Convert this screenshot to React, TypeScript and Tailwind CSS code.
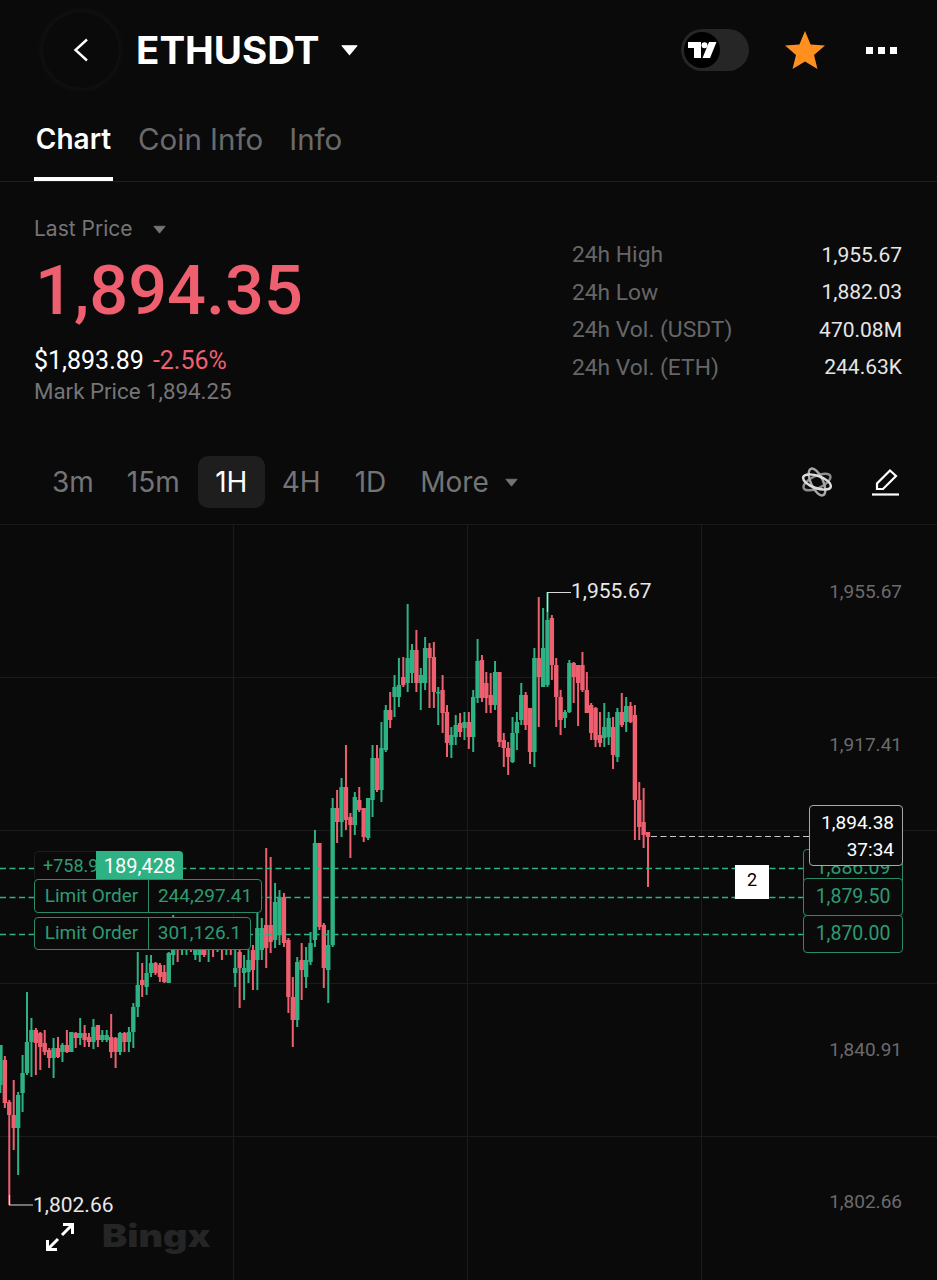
import React from 'react';

type Candle = [string, number, number, number, number];

// right to left: color, wick top, body top, body bottom, wick bottom (page px)
const candles: Candle[] = [
  ['r', 832, 832, 837, 887], ['r', 788, 822, 835, 848], ['r', 782, 800, 827, 840], ['r', 705, 715, 800, 840],
  ['r', 702, 706, 722, 723], ['g', 697, 706, 722, 732], ['r', 693, 712, 725, 727], ['g', 708, 712, 757, 762],
  ['r', 717, 727, 755, 769], ['g', 712, 718, 737, 745], ['g', 703, 727, 738, 747], ['r', 712, 735, 743, 747],
  ['r', 707, 708, 740, 747], ['r', 703, 705, 733, 740], ['r', 672, 690, 713, 713], ['r', 652, 665, 690, 692],
  ['r', 665, 665, 683, 726], ['r', 662, 663, 677, 703], ['g', 660, 663, 712, 713], ['g', 710, 712, 718, 728],
  ['r', 690, 697, 720, 735], ['r', 658, 665, 697, 727], ['r', 615, 618, 665, 680], ['g', 592, 620, 685, 687],
  ['g', 608, 648, 687, 687], ['r', 597, 658, 677, 727], ['g', 648, 658, 752, 767], ['r', 708, 708, 752, 764],
  ['r', 692, 695, 725, 730], ['g', 683, 695, 720, 725], ['g', 712, 722, 733, 750], ['g', 717, 733, 762, 763],
  ['r', 742, 748, 757, 775], ['r', 733, 740, 748, 767], ['r', 672, 672, 742, 747], ['g', 661, 672, 705, 710],
  ['r', 673, 695, 705, 713], ['r', 672, 683, 698, 713], ['r', 655, 660, 698, 702], ['g', 639, 661, 698, 703],
  ['g', 690, 697, 737, 752], ['r', 712, 722, 737, 749], ['g', 712, 722, 728, 740], ['r', 713, 723, 732, 737],
  ['g', 715, 725, 737, 745], ['g', 727, 735, 745, 758], ['r', 705, 712, 743, 757], ['r', 675, 690, 713, 733],
  ['g', 687, 692, 693, 725], ['r', 642, 657, 692, 708], ['r', 643, 648, 658, 708], ['g', 637, 648, 683, 690],
  ['g', 668, 675, 683, 710], ['r', 630, 650, 683, 692], ['g', 644, 650, 673, 683], ['g', 604, 658, 683, 692],
  ['r', 657, 677, 685, 687], ['g', 658, 685, 697, 707], ['g', 675, 687, 697, 717], ['r', 692, 710, 720, 728],
  ['g', 705, 710, 750, 752], ['g', 722, 748, 790, 802], ['r', 745, 758, 790, 792], ['g', 745, 758, 800, 817],
  ['g', 798, 798, 838, 840], ['r', 808, 808, 837, 842], ['r', 787, 800, 810, 812], ['g', 792, 797, 825, 835],
  ['r', 813, 817, 825, 858], ['r', 745, 787, 820, 830], ['g', 778, 787, 822, 837], ['r', 790, 808, 822, 843],
  ['g', 798, 808, 945, 947], ['g', 930, 945, 970, 1003], ['r', 923, 925, 968, 988], ['r', 843, 843, 927, 930],
  ['g', 830, 843, 940, 947], ['g', 932, 943, 962, 965], ['g', 947, 960, 977, 988], ['r', 943, 960, 970, 1000],
  ['g', 957, 962, 1020, 1027], ['r', 977, 997, 1020, 1047], ['r', 938, 940, 997, 1013], ['r', 893, 897, 943, 947],
  ['g', 890, 898, 935, 945], ['g', 883, 902, 940, 948], ['r', 857, 925, 942, 953], ['r', 848, 925, 948, 968],
  ['g', 918, 928, 950, 960], ['g', 913, 928, 960, 990], ['r', 945, 950, 970, 990], ['g', 945, 960, 972, 983],
  ['g', 955, 968, 973, 1000], ['r', 945, 952, 968, 1008], ['g', 950, 968, 973, 987], ['r', 920, 945, 948, 955],
  ['g', 925, 945, 948, 955], ['r', 925, 945, 950, 960], ['g', 925, 945, 950, 952], ['r', 918, 945, 950, 957],
  ['g', 920, 945, 950, 962], ['r', 925, 945, 955, 957], ['g', 930, 945, 955, 962], ['g', 925, 945, 955, 960],
  ['r', 920, 945, 950, 952], ['g', 930, 945, 950, 955], ['g', 925, 945, 950, 955], ['r', 930, 945, 950, 962],
  ['g', 915, 950, 955, 965], ['g', 952, 953, 983, 983], ['r', 965, 972, 982, 983], ['r', 963, 965, 977, 982],
  ['r', 962, 963, 973, 975], ['g', 955, 963, 973, 977], ['g', 955, 973, 987, 995], ['r', 963, 980, 985, 997],
  ['g', 952, 985, 1007, 1017], ['g', 1003, 1007, 1032, 1048], ['g', 1027, 1032, 1042, 1052], ['r', 1032, 1033, 1042, 1052],
  ['g', 1032, 1033, 1052, 1055], ['r', 1037, 1038, 1052, 1068], ['r', 1014, 1037, 1052, 1058], ['g', 1030, 1035, 1040, 1042],
  ['g', 1030, 1035, 1040, 1042], ['r', 1025, 1025, 1040, 1047], ['g', 1019, 1027, 1042, 1049], ['r', 1033, 1037, 1042, 1047],
  ['r', 1025, 1033, 1040, 1047], ['g', 1018, 1033, 1038, 1045], ['r', 1032, 1033, 1038, 1048], ['g', 1032, 1032, 1052, 1052],
  ['r', 1030, 1045, 1052, 1053], ['g', 1043, 1045, 1052, 1062], ['r', 1037, 1048, 1057, 1058], ['g', 1038, 1048, 1058, 1078],
  ['r', 1048, 1050, 1058, 1068], ['r', 1030, 1043, 1052, 1055], ['r', 1032, 1033, 1047, 1070], ['r', 1028, 1030, 1043, 1075],
  ['g', 1018, 1030, 1042, 1077], ['g', 992, 1042, 1073, 1075], ['g', 1055, 1073, 1093, 1112], ['g', 1092, 1095, 1128, 1175],
  ['r', 1080, 1115, 1128, 1150], ['r', 1100, 1102, 1115, 1205], ['r', 1056, 1060, 1103, 1108], ['g', 1045, 1045, 1085, 1093],
];

const GREEN = '#2eb183';
const RED = '#ee5f70';

const Caret = ({ className }: { className: string }) => (
  <svg viewBox="0 0 16 11" className={className}>
    <path d="M1 1.5h14L8 10z" fill="currentColor" stroke="currentColor" strokeLinejoin="round" />
  </svg>
);

const stats = [
  ['24h High', '1,955.67'],
  ['24h Low', '1,882.03'],
  ['24h Vol. (USDT)', '470.08M'],
  ['24h Vol. (ETH)', '244.63K'],
];

const axisLabels = [
  { text: '1,955.67', pos: 'top-[54px]' },
  { text: '1,917.41', pos: 'top-[207px]' },
  { text: '1,840.91', pos: 'top-[512px]' },
  { text: '1,802.66', pos: 'top-[664px]' },
];

// candle spacing is a bit tighter on the right part of the chart
const candleX = (k: number) => (k <= 61 ? 648 - 4.37 * k : 381.4 - 4.43 * (k - 61));

const Chart = () => (
  <svg viewBox="0 525 937 755" className="absolute inset-0 w-full h-full">
    {[233.5, 467.5, 701.5].map((x) => (
      <line key={x} x1={x} x2={x} y1={525} y2={1280} stroke="#1b1b1c" strokeWidth="1" />
    ))}
    {[677.5, 830.5, 983.5, 1136.5].map((y) => (
      <line key={y} x1={0} x2={937} y1={y} y2={y} stroke="#1b1b1c" strokeWidth="1" />
    ))}
    {candles.map(([c, wt, bt, bb, wb], k) => {
      const x = candleX(k);
      const color = c === 'g' ? GREEN : RED;
      return (
        <g key={k}>
          <line x1={x} x2={x} y1={wt} y2={wb} stroke={color} strokeWidth="2" />
          <rect x={x - 2.2} y={bt} width={4.4} height={Math.max(bb - bt, 1.5)} fill={color} />
        </g>
      );
    })}
    {[868.5, 897.5, 934.5].map((y) => (
      <line key={y} x1={0} x2={803} y1={y} y2={y} stroke={GREEN} strokeWidth="1.5" strokeDasharray="6 3.5" />
    ))}
    <line x1={651} x2={809} y1={836.5} y2={836.5} stroke="#c9c9c9" strokeWidth="1.2" strokeDasharray="6 3.5" />
    <path d="M547.5 612V592.5H571" fill="none" stroke="#d8d8d8" strokeWidth="1.2" />
    <path d="M9.5 1195V1205H33" fill="none" stroke="#d8d8d8" strokeWidth="1.2" />
  </svg>
);

export default function App() {
  return (
    <div className="w-[937px] h-[1280px] bg-[#0a0a0b] overflow-hidden flex flex-col font-['Roboto',sans-serif]">
      {/* header */}
      <div className="h-[100px] flex items-center pl-[43px] pr-[40px]">
        <button className="w-[76px] h-[76px] rounded-full shadow-[0_0_7px_2px_rgba(255,255,255,0.045)] flex items-center justify-center text-white">
          <svg viewBox="0 0 16 24" className="w-[16px] h-[24px]" fill="none" stroke="currentColor" strokeWidth="2.4">
            <path d="M14 1.5L2.5 12 14 22.5" />
          </svg>
        </button>
        <h1 className="ml-[17px] font-['Inter',sans-serif] font-bold text-[38.5px] leading-none text-white">ETHUSDT</h1>
        <Caret className="ml-[21px] w-[17px] h-[12px] text-white" />
        <div className="ml-auto w-[68px] h-[42px] rounded-full bg-[#262627] flex items-center pl-[3px]">
          <div className="w-[36px] h-[36px] rounded-full bg-black flex items-center justify-center">
            <svg viewBox="0 0 30 18" className="w-[30px] h-[18px]" fill="#fff">
              <path d="M1 1h13v16H7V7H1z" />
              <circle cx="17.5" cy="4.2" r="3" />
              <path d="M22 1h7.5L23 17h-7.5z" />
            </svg>
          </div>
        </div>
        <svg viewBox="0 0 40 38" className="ml-[36px] w-[40px] h-[38px]">
          <path d="M20 0l5.6 13.6L40 14.6 29 24l3.5 14L20 30.4 7.5 38 11 24 0 14.6l14.4-1z" fill="#ff8f1f" />
        </svg>
        <div className="ml-[41px] flex gap-[5px]">
          <span className="w-[7px] h-[7px] bg-white" />
          <span className="w-[7px] h-[7px] bg-white" />
          <span className="w-[7px] h-[7px] bg-white" />
        </div>
      </div>

      {/* tabs */}
      <div className="h-[82px] border-b border-[#1f1f20] flex items-start pl-[34px] font-['Inter',sans-serif] leading-none">
        <div className="w-[79px] h-full border-b-[4px] border-white -mb-px text-center pt-[25px] text-[28px] font-semibold text-white">Chart</div>
        <div className="ml-[25px] pt-[25px] text-[29.5px] text-[#6a6a6b]">Coin Info</div>
        <div className="ml-[26px] pt-[25px] text-[29.5px] text-[#6a6a6b]">Info</div>
      </div>

      {/* price block */}
      <div className="h-[241px] flex justify-between pl-[34px] pr-[35px]">
        <div className="flex flex-col items-start pt-[35px]">
          <div className="flex items-center text-[21px] leading-[24px] font-['Inter',sans-serif] text-[#757576]">
            Last Price
            <Caret className="ml-[20px] w-[13px] h-[9px]" />
          </div>
          <div className="mt-[15px] ml-[1px] text-[68.5px] leading-[70px] font-medium text-[#ee5f70]">1,894.35</div>
          <div className="mt-[20px] flex items-center gap-[9px] text-[25px] leading-[30px]">
            <span className="text-white">$1,893.89</span>
            <span className="text-[#ee5f70]">-2.56%</span>
          </div>
          <div className="text-[22.3px] leading-[30px] text-[#757576]">Mark Price 1,894.25</div>
        </div>
        <div className="w-[330px] pt-[59px] flex flex-col gap-[9px]">
          {stats.map(([label, value]) => (
            <div key={label} className="flex justify-between items-center h-[28.5px]">
              <span className="text-[22.8px] text-[#666667]">{label}</span>
              <span className="text-[21px] text-[#e6e6e6]">{value}</span>
            </div>
          ))}
        </div>
      </div>

      {/* intervals */}
      <div className="h-[102px] flex items-center pl-[52px] pr-[36px] pt-[17px] text-[28px] text-[#747475] border-b border-[#1a1a1b] font-['Inter',sans-serif]">
        <span>3m</span>
        <span className="ml-[33px]">15m</span>
        <span className="ml-[18px] w-[67px] h-[52px] rounded-[10px] bg-[#1e1e1f] text-white flex items-center justify-center">1H</span>
        <span className="ml-[17px]">4H</span>
        <span className="ml-[34px]">1D</span>
        <span className="ml-[34px]">More</span>
        <Caret className="ml-[16px] w-[13px] h-[9px]" />
        <svg viewBox="0 0 34 34" className="ml-auto w-[32px] h-[32px]" fill="none" strokeWidth="2.6">
          <ellipse cx="17" cy="17" rx="15.5" ry="6.5" transform="rotate(155 17 17)" stroke="#8d8d8d" />
          <ellipse cx="17" cy="17" rx="15.5" ry="6.5" transform="rotate(65 17 17)" stroke="#a8a8a8" />
          <ellipse cx="17" cy="17" rx="15.5" ry="6.5" transform="rotate(20 17 17)" stroke="#dcdcdc" />
        </svg>
        <svg viewBox="0 0 30 30" className="ml-[38px] w-[30px] h-[30px]" fill="none" stroke="#fff" strokeWidth="2.2">
          <path d="M3 22v-5.5L16 3.5l6 5.5L9 22z" transform="translate(3 0)" strokeLinejoin="miter" />
          <path d="M1 27.5h27" />
        </svg>
      </div>

      {/* chart */}
      <div className="relative flex-1">
        <Chart />

        {axisLabels.map((l) => (
          <span key={l.text} className={`absolute right-[35px] text-[19px] leading-[26px] text-[#6b6b6c] ${l.pos}`}>
            {l.text}
          </span>
        ))}

        <span className="absolute left-[571px] top-[53px] text-[21px] leading-[26px] text-[#e8e8e8]">1,955.67</span>
        <span className="absolute left-[33px] top-[667px] text-[21px] leading-[26px] text-[#e8e8e8]">1,802.66</span>

        {/* order labels */}
        <div className="absolute left-[34px] top-[326px] w-[149px] h-[30px] flex rounded-[4px] border border-[#1c1c1d] bg-[#0a0a0b] text-[18px] leading-[28px] text-[#2f9a72] pl-[8px]">
          +758.9
        </div>
        <div className="absolute left-[96px] top-[326px] w-[87px] h-[29px] rounded-tr-[4px] bg-[#2eb183] text-white text-[20px] leading-[31px] text-center">189,428</div>
        <div className="absolute left-[34px] top-[354px] w-[228px] h-[34px] flex rounded-[4px] border border-[#2a8a67] bg-[#0a0a0b] text-[19px] leading-[31px] text-[#2f9a72]">
          <span className="w-[114px] border-r border-[#2a8a67] text-center">Limit Order</span>
          <span className="flex-1 text-center">244,297.41</span>
        </div>
        <div className="absolute left-[34px] top-[392px] w-[217px] h-[33px] flex rounded-[4px] border border-[#2a8a67] bg-[#0a0a0b] text-[19px] leading-[30px] text-[#2f9a72]">
          <span className="w-[114px] border-r border-[#2a8a67] text-center">Limit Order</span>
          <span className="flex-1 text-center">301,126.1</span>
        </div>

        {/* axis tags */}
        <div className="absolute left-[803px] top-[324px] w-[100px] h-[37px] rounded-[4px] border border-[#2a8a67] bg-[#0a0a0b] text-[19.5px] leading-[36px] text-center text-[#2f9a72]">1,886.09</div>
        <div className="absolute left-[803px] top-[353px] w-[100px] h-[38px] rounded-[4px] border border-[#2a8a67] bg-[#0a0a0b] text-[19.5px] leading-[36px] text-center text-[#2f9a72]">1,879.50</div>
        <div className="absolute left-[803px] top-[390px] w-[100px] h-[38px] rounded-[4px] border border-[#2a8a67] bg-[#0a0a0b] text-[19.5px] leading-[36px] text-center text-[#2f9a72]">1,870.00</div>
        <div className="absolute left-[809px] top-[280px] w-[94px] h-[61px] rounded-[4px] border border-[#a9a9a9] bg-[#0a0a0b] text-[19px] leading-[27px] text-right text-white pr-[8px] pt-[3px]">
          <div>1,894.38</div>
          <div>37:34</div>
        </div>
        <div className="absolute left-[735px] top-[340px] w-[34px] h-[34px] bg-white text-black text-[18px] leading-[30px] text-center">2</div>

        {/* expand + watermark */}
        <svg viewBox="0 0 28 28" className="absolute left-[46px] top-[698px] w-[28px] h-[28px]" fill="none" stroke="#fff" strokeWidth="3">
          <path d="M17 1.5h9.5V11M26 2L16 12" />
          <path d="M11 26.5H1.5V17M2 26l10-10" />
        </svg>
        <span className="absolute left-[102px] top-[691px] origin-left scale-x-[1.22] font-['Inter',sans-serif] font-black text-[31px] leading-[40px] text-[#252526]">Bingx</span>
      </div>
    </div>
  );
}
